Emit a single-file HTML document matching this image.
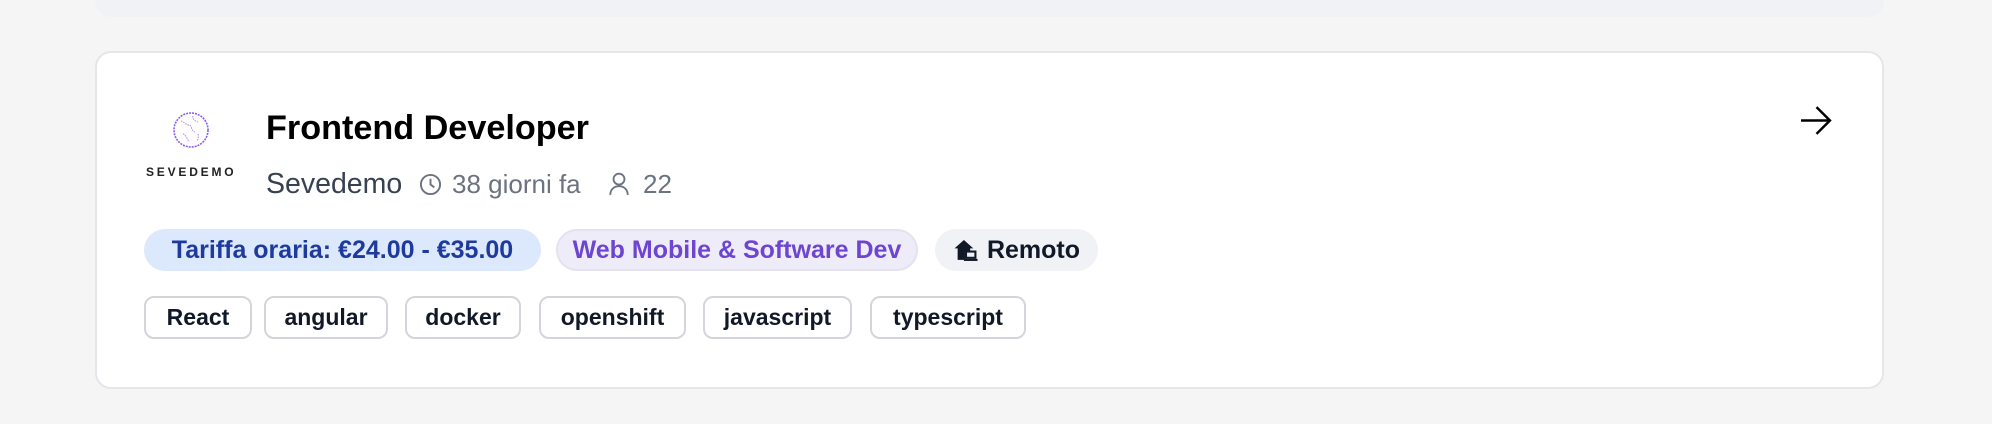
<!DOCTYPE html>
<html><head><meta charset="utf-8"><style>
*{margin:0;padding:0;box-sizing:border-box}
body{width:1992px;height:424px;background:#f5f5f6;font-family:"Liberation Sans",Arial,sans-serif;position:relative;overflow:hidden}
.top{position:absolute;left:95px;top:-20px;width:1789px;height:37px;background:#f1f2f5;border-radius:16px}
.card{position:absolute;left:95px;top:51px;width:1789px;height:338px;background:#fff;border:2px solid #e5e6ea;border-radius:16px}
.a{position:absolute;white-space:nowrap}
.title{left:266px;top:108px;font-size:34.2px;line-height:40px;font-weight:bold;color:#000}
.sub{left:266px;top:167px;font-size:28.5px;line-height:34px;color:#374151}
.meta{top:168px;font-size:26px;line-height:32px;color:#6b7280}
.badge{position:absolute;top:229px;height:42px;border-radius:21px;font-size:25px;font-weight:bold;line-height:42px;text-align:center;white-space:nowrap}
.tag{position:absolute;top:296px;height:43px;border:2px solid #d4d5da;border-radius:10px;font-size:23px;font-weight:bold;color:#111827;line-height:39px;text-align:center;white-space:nowrap}
</style></head><body>
<div class="top"></div>
<div class="card"></div>
<svg class="a" style="left:172px;top:111px" width="38" height="38" viewBox="0 0 38 38"><circle cx="19" cy="19" r="17" fill="none" stroke="#8b5cf6" stroke-width="1.6" stroke-dasharray="2 1"/><path d="M9 10c3 1 5 4 8 4s2 6 6 7M21 5c-1 3 2 5 5 6M11 23c2 0 4 4 6 8M26 23c1 2 0 5-1 7" fill="none" stroke="#a78bfa" stroke-width="1" stroke-dasharray="1.5 1"/></svg>
<div class="a" style="left:146px;top:165px;font-size:12px;letter-spacing:2.8px;color:#222;font-weight:bold">SEVEDEMO</div>
<div class="a title">Frontend Developer</div>
<div class="a sub">Sevedemo</div>
<svg class="a" style="left:419px;top:173px" width="23" height="23" viewBox="0 0 24 24" fill="none" stroke="#6b7280" stroke-width="2"><circle cx="12" cy="12" r="10"/><path d="M12 6v6l4 3"/></svg>
<div class="a meta" style="left:452px">38 giorni fa</div>
<svg class="a" style="left:608px;top:172px" width="22" height="24" viewBox="0 0 19 22" fill="none" stroke="#6b7280" stroke-width="1.7"><circle cx="9.5" cy="6.5" r="5"/><path d="M1.5 21c0-5 3.5-8 8-8s8 3 8 8"/></svg>
<div class="a meta" style="left:643px">22</div>
<svg class="a" style="left:1800px;top:106px" width="32" height="29" viewBox="0 0 31 28" fill="none" stroke="#000" stroke-width="2.4"><path d="M1 14h28M16 1l13 13-13 13"/></svg>
<div class="badge" style="left:144px;width:397px;background:#dce8fb;color:#1e3a9f">Tariffa oraria: €24.00 - €35.00</div>
<div class="badge" style="left:556px;width:362px;background:#efecfa;color:#6d45d0;border:2px solid #e4e2ee;line-height:38px">Web Mobile &amp; Software Dev</div>
<div class="badge" style="left:935px;width:163px;background:#f0f2f6;color:#111827;padding-left:34px">Remoto</div>
<svg class="a" style="left:953px;top:239px" width="26" height="23" viewBox="0 0 24 22"><path d="M1 9L10 1l9 8h-3v3h-5v8H4V9z" fill="#111827"/><rect x="12" y="12" width="9" height="6" fill="none" stroke="#111827" stroke-width="2"/><path d="M10 20h13" stroke="#111827" stroke-width="2"/></svg>
<div class="tag" style="left:144px;width:108px">React</div>
<div class="tag" style="left:264px;width:124px">angular</div>
<div class="tag" style="left:405px;width:116px">docker</div>
<div class="tag" style="left:539px;width:147px">openshift</div>
<div class="tag" style="left:703px;width:149px">javascript</div>
<div class="tag" style="left:870px;width:156px">typescript</div>
</body></html>
